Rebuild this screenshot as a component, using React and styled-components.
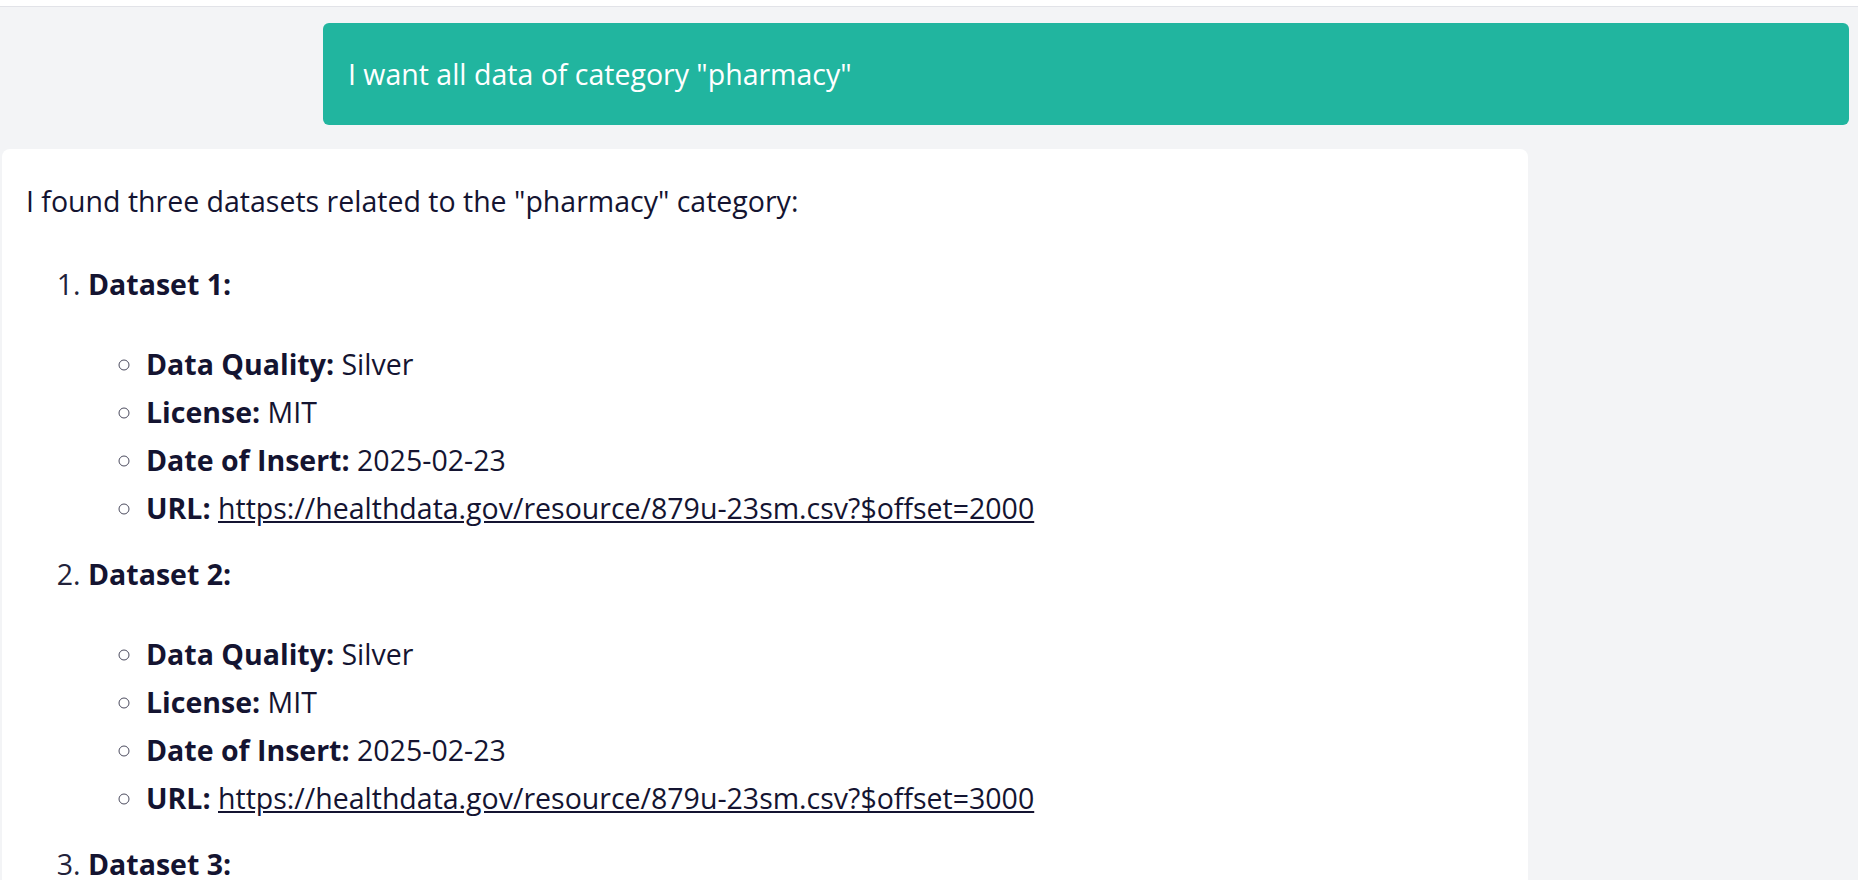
import React from "react";
import styled, { createGlobalStyle } from "styled-components";

const GlobalStyle = createGlobalStyle`
  html, body {
    margin: 0;
    padding: 0;
    background: #f3f4f6;
    font-family: "Open Sans", "Noto Sans", sans-serif;
    color: #141431;
  }
`;

const datasets = [
  { quality: "Silver", license: "MIT", date: "2025-02-23", offset: 2000 },
  { quality: "Silver", license: "MIT", date: "2025-02-23", offset: 3000 },
  { quality: "Silver", license: "MIT", date: "2025-02-23", offset: 4000 },
];

const App = () => {
  return (
    <>
      <GlobalStyle />
      <TopStrip />
      <Chat>
        <UserBubble>I want all data of category "pharmacy"</UserBubble>

        <BotCard>
          <Intro>I found three datasets related to the "pharmacy" category:</Intro>
          <DatasetList>
            {datasets.map((d, idx) => {
              const url = `https://healthdata.gov/resource/879u-23sm.csv?$offset=${d.offset}`;
              return (
                <DatasetItem key={idx}>
                  <strong>Dataset {idx + 1}:</strong>
                  <FieldList>
                    <li>
                      <strong>Data Quality:</strong> {d.quality}
                    </li>
                    <li>
                      <strong>License:</strong> {d.license}
                    </li>
                    <li>
                      <strong>Date of Insert:</strong> {d.date}
                    </li>
                    <li>
                      <strong>URL:</strong> <Link href={url}>{url}</Link>
                    </li>
                  </FieldList>
                </DatasetItem>
              );
            })}
          </DatasetList>
        </BotCard>
      </Chat>
    </>
  );
};

const TopStrip = styled.div`
  height: 6px;
  background: #ffffff;
  border-bottom: 1px solid #e2e3e8;
`;

const Chat = styled.div`
  display: flex;
  flex-direction: column;
  gap: 24px;
  padding: 16px 9px 0 2px;
`;

const UserBubble = styled.div`
  align-self: flex-end;
  width: 1526px;
  box-sizing: border-box;
  background: #21b59f;
  color: #ffffff;
  border-radius: 6px;
  padding: 27px 25px;
  font-size: 28.5px;
  line-height: 48px;
`;

const BotCard = styled.div`
  align-self: flex-start;
  width: 1526px;
  box-sizing: border-box;
  background: #ffffff;
  border-radius: 8px;
  padding: 28px 24px;
  font-size: 28.5px;
  line-height: 48px;

  strong {
    font-weight: 700;
  }
`;

const Intro = styled.p`
  margin: 0 0 35px;
`;

const DatasetList = styled.ol`
  margin: 0;
  padding-left: 62px;
  list-style: decimal;

  & > li::marker {
    color: #22223a;
  }
`;

const DatasetItem = styled.li`
  margin-bottom: 18px;
`;

const FieldList = styled.ul`
  margin: 32px 0 0;
  padding-left: 58px;
  list-style: circle;

  & > li::marker {
    color: #4b4b5e;
  }
`;

const Link = styled.a`
  color: inherit;
  text-decoration: underline;
`;

export default App;
